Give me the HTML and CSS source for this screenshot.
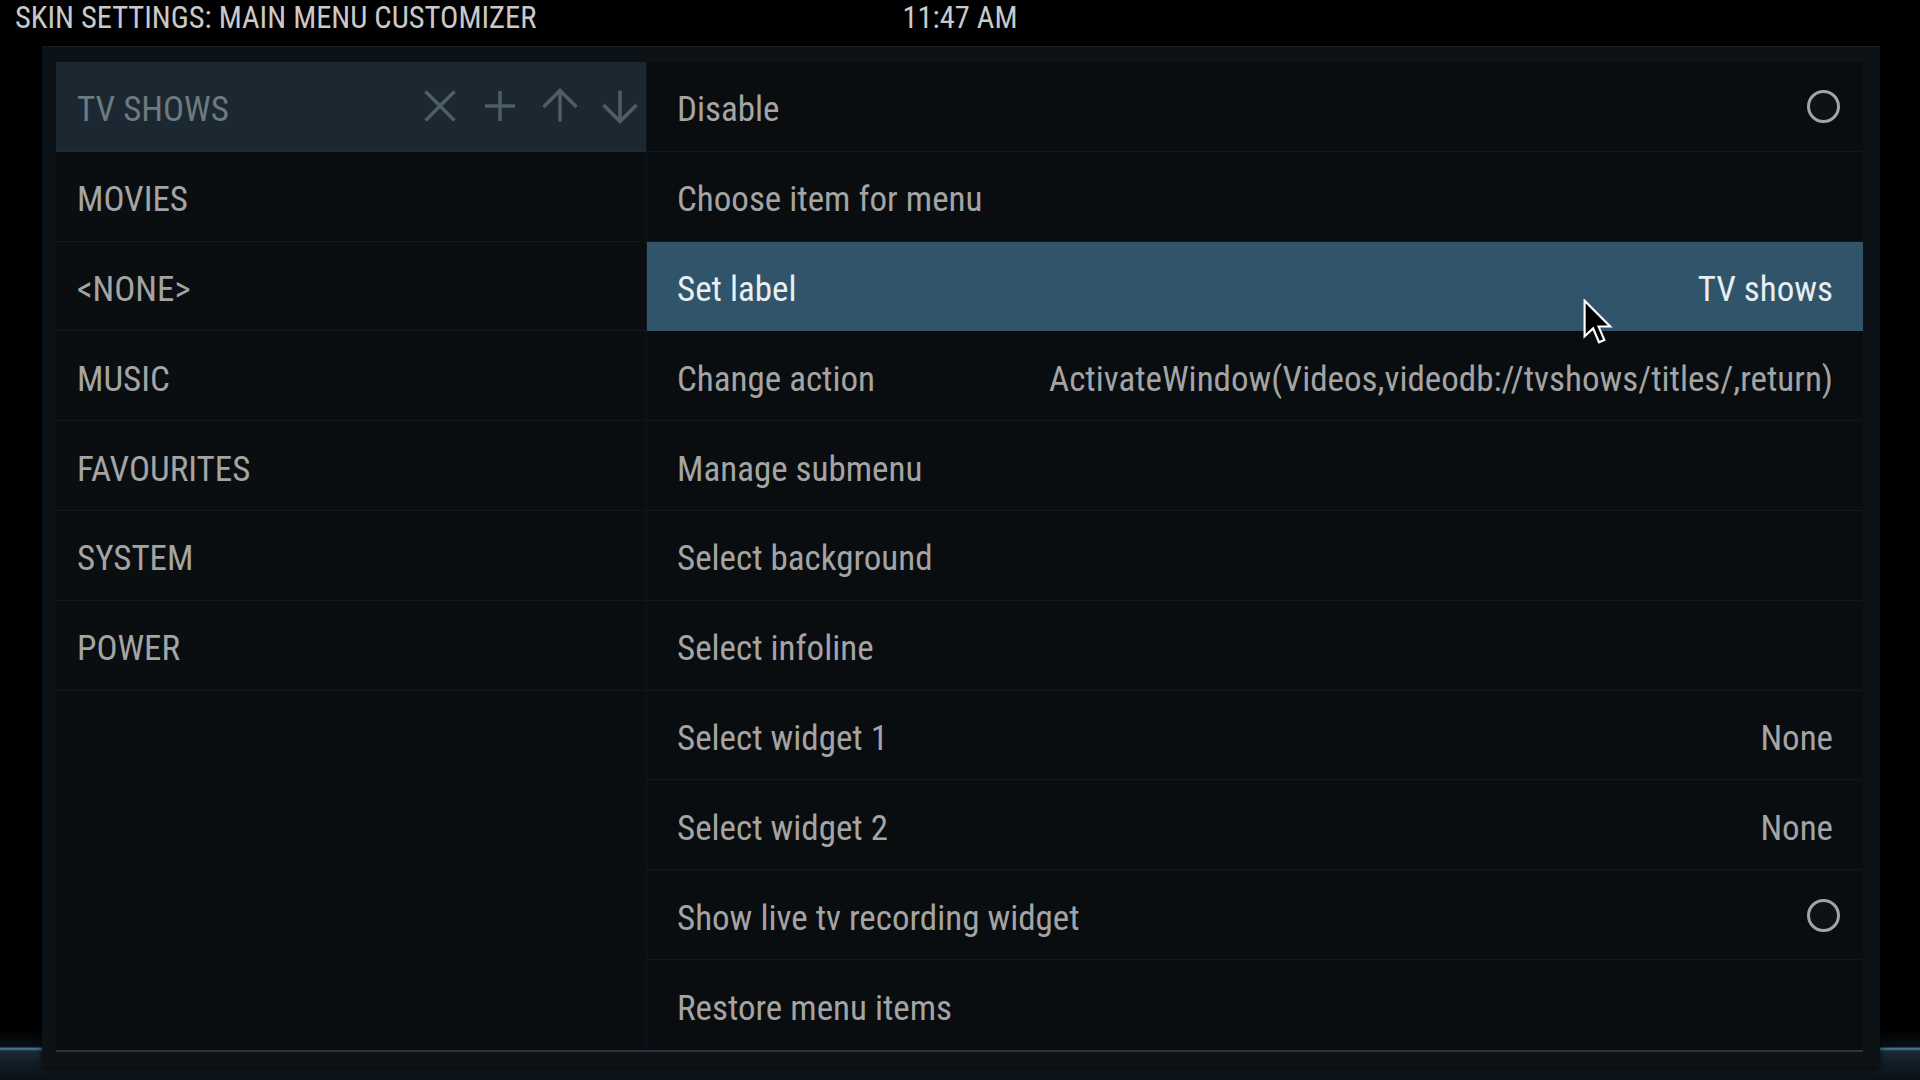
FILE: index.html
```html
<!DOCTYPE html>
<html lang="en">
<head>
<meta charset="utf-8">
<title>Skin settings: Main menu customizer</title>
<link rel="stylesheet" href="styles.css">
</head>
<body>
<div class="screen">
  <header class="topbar">
    <div class="title">SKIN SETTINGS: MAIN MENU CUSTOMIZER</div>
    <div class="clock">11:47 AM</div>
    <div></div>
  </header>

  <main class="panel">
    <div class="lists">
      <ul class="menu-items">
        <li class="item item-current">
          <span class="item-label">TV SHOWS</span>
          <span class="item-tools">
            <svg class="tool" viewBox="0 0 40 40"><path d="M5.5 5.5 L34.5 34.5 M34.5 5.5 L5.5 34.5"/></svg>
            <svg class="tool" viewBox="0 0 40 40"><path d="M5 20 H35 M20 5 V35"/></svg>
            <svg class="tool" viewBox="0 0 40 40"><path d="M20 4.5 V35.5 M3.5 21 L20 4.5 L36.5 21"/></svg>
            <svg class="tool" viewBox="0 0 40 40"><path d="M20 35.5 V4.5 M3.5 19 L20 35.5 L36.5 19"/></svg>
          </span>
        </li>
        <li class="item"><span class="item-label">MOVIES</span></li>
        <li class="item"><span class="item-label">&lt;NONE&gt;</span></li>
        <li class="item"><span class="item-label">MUSIC</span></li>
        <li class="item"><span class="item-label">FAVOURITES</span></li>
        <li class="item"><span class="item-label">SYSTEM</span></li>
        <li class="item"><span class="item-label">POWER</span></li>
      </ul>

      <ul class="options">
        <li class="option"><span>Disable</span><span class="radio"></span></li>
        <li class="option"><span>Choose item for menu</span></li>
        <li class="option option-focus"><span>Set label</span><span class="value">TV shows</span></li>
        <li class="option"><span>Change action</span><span class="value">ActivateWindow(Videos,videodb://tvshows/titles/,return)</span></li>
        <li class="option"><span>Manage submenu</span></li>
        <li class="option"><span>Select background</span></li>
        <li class="option"><span>Select infoline</span></li>
        <li class="option"><span>Select widget 1</span><span class="value">None</span></li>
        <li class="option"><span>Select widget 2</span><span class="value">None</span></li>
        <li class="option"><span>Show live tv recording widget</span><span class="radio"></span></li>
        <li class="option"><span>Restore menu items</span></li>
      </ul>
    </div>
  </main>

  <svg class="pointer" viewBox="0 0 30 44" width="32" height="47">
    <path d="M1.5 1.5 L1.5 35 L9.5 27.5 L15 40.5 L20 38.3 L14.6 25.8 L25.5 25.8 Z"/>
  </svg>
</div>
</body>
</html>
```

FILE: styles.css
```css
* {
  box-sizing: border-box;
}

html,
body {
  margin: 0;
  padding: 0;
}

body {
  width: 1920px;
  height: 1080px;
  overflow: hidden;
  background: #000;
  font-family: "Roboto Condensed", "Roboto", "Liberation Sans", sans-serif;
}

.screen {
  position: relative;
  width: 1920px;
  height: 1080px;
  background:
    linear-gradient(to bottom,
      #000 0,
      #000 1030px,
      #081018 1047px,
      #3f6a84 1048px,
      #4a7b96 1049px,
      #1b2b37 1051px,
      #111d25 1064px,
      #0b1217 1080px);
}

/* top bar: title on the left, clock centred */
.topbar {
  display: grid;
  grid-template-columns: 1fr auto 1fr;
  height: 46px;
  padding-left: 15px;
  font-size: 30.5px;
  line-height: 36px;
  color: #c9c9c9;
}

.clock {
  padding-right: 15px;
}

/* dialog frame */
.panel {
  margin: 0 40px 0 42px;
  padding: 15px 17px 14px 14px;
  background: #0c1216;
  border-top: 1px solid #141c21;
  box-shadow: 0 3px 6px rgba(0, 0, 0, 0.7);
}

.lists {
  display: grid;
  grid-template-columns: 591px 1fr;
  background: #090d10;
  border-bottom: 2px solid #263541;
}

ul {
  list-style: none;
  margin: 0;
  padding: 0;
}

.menu-items {
  border-right: 1px solid #10171c;
}

.item,
.option {
  display: flex;
  align-items: center;
  justify-content: space-between;
  height: 89.8px;
  padding-top: 7px;
  font-size: 35px;
  color: #a4a4a4;
  border-bottom: 1px solid #11181d;
}

.item {
  padding-left: 21px;
  padding-right: 6px;
  background: #0a0e11;
}

.item-current {
  background: #1b2831;
  border-bottom-color: #1e2d37;
  color: #6d7a80;
}

.item-tools {
  display: flex;
  gap: 20px;
  margin-top: -7px;
}

.tool {
  width: 40px;
  height: 40px;
  fill: none;
  stroke: #4f5e65;
  stroke-width: 3.5;
}

.option {
  padding-left: 30px;
  padding-right: 30px;
}

.option:last-child {
  border-bottom: none;
}

.option-focus {
  background: #30546a;
  border-bottom-color: #30546a;
  color: #e9eef1;
}

.value {
  white-space: nowrap;
}

.radio {
  width: 33px;
  height: 33px;
  margin-right: -7px;
  margin-top: -6px;
  border: 3px solid #a4a4a4;
  border-radius: 50%;
  background: #0c1216;
}

/* mouse pointer over the list */
.pointer {
  position: absolute;
  left: 1583px;
  top: 299px;
}

.pointer path {
  fill: #000;
  stroke: #fff;
  stroke-width: 2;
  stroke-linejoin: miter;
}
```
